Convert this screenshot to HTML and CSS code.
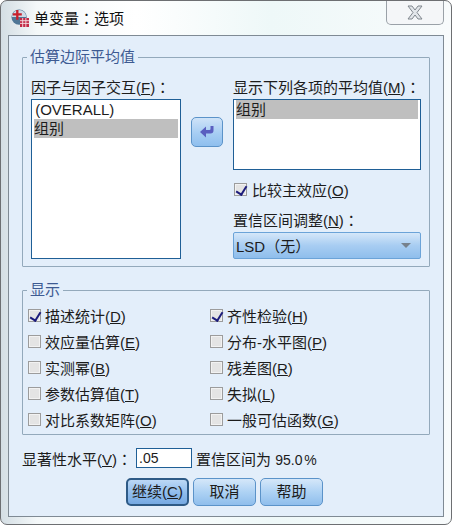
FILE: index.html
```html
<!DOCTYPE html>
<html lang="zh-CN">
  <head>
    <meta charset="UTF-8" />
    <title>单变量：选项</title>
    <link rel="stylesheet" href="styles.css">
  </head>
  <body>
    <div class="window">
      <div class="titlebar">
        <svg class="app-icon" width="18" height="18" viewBox="0 0 20 20">
          <circle cx="9" cy="9" r="8.500" fill="#4f7696"/>
          <path d="M1 9a8 8 0 0 1 16 0z" fill="#cfdbe6"/>
          <path d="M7 1v11M2 6h10" stroke="#c8202c" stroke-width="2.600"/>
          <rect x="10" y="10" width="10" height="10" fill="#c22a46"/>
          <path d="M10 13h10M10 16h10M13 10v10M16.500 10v10" stroke="#f3dfe3" stroke-width="1"/>
        </svg>
        <span class="title">单变量<span class="colon" lang="zh-TW">：</span>选项</span>
        <div class="close">
          <svg width="18" height="15" viewBox="0 0 18 15">
            <path d="M2 1h4l3 4 3-4h4l-5 6.500 5 6.500h-4l-3-4-3 4H2l5-6.500z" fill="#e2e6ea" stroke="#80878e" stroke-width="1"/>
          </svg>
        </div>
      </div>

      <div class="panel">
        <fieldset class="group group-means">
          <legend>估算边际平均值</legend>
          <div class="means">
            <div class="col-left">
              <div class="label">因子与因子交互(<u>F</u>)<span class="colon" lang="zh-TW">：</span></div>
              <div class="list list-factors">
                <div class="item">&nbsp;(OVERALL)</div>
                <div class="item selected">组别</div>
              </div>
            </div>
            <div class="col-mid">
              <div class="arrow-btn">
                <svg width="16" height="14" viewBox="0 0 16 14">
                  <path d="M14.500 1v4.500q0 3-3 3H7V12.500L1 7l6-5.500V5h3.500q1 0 1-1V1z" fill="#5a5fc0"/>
                </svg>
              </div>
            </div>
            <div class="col-right">
              <div class="label">显示下列各项的平均值(<u>M</u>)<span class="colon" lang="zh-TW">：</span></div>
              <div class="list list-shown">
                <div class="item selected">组别</div>
              </div>
              <div class="check compare"><span class="box on"></span><span>比较主效应(<u>O</u>)</span></div>
              <div class="label adjust">置信区间调整(<u>N</u>)<span class="colon" lang="zh-TW">：</span></div>
              <div class="combo">
                <span>LSD（无）</span>
                <span class="caret"></span>
              </div>
            </div>
          </div>
        </fieldset>

        <fieldset class="group group-display">
          <legend>显示</legend>
          <div class="checks">
            <div class="check"><span class="box on"></span><span>描述统计(<u>D</u>)</span></div>
            <div class="check"><span class="box on"></span><span>齐性检验(<u>H</u>)</span></div>
            <div class="check"><span class="box"></span><span>效应量估算(<u>E</u>)</span></div>
            <div class="check"><span class="box"></span><span>分布-水平图(<u>P</u>)</span></div>
            <div class="check"><span class="box"></span><span>实测幂(<u>B</u>)</span></div>
            <div class="check"><span class="box"></span><span>残差图(<u>R</u>)</span></div>
            <div class="check"><span class="box"></span><span>参数估算值(<u>T</u>)</span></div>
            <div class="check"><span class="box"></span><span>失拟(<u>L</u>)</span></div>
            <div class="check"><span class="box"></span><span>对比系数矩阵(<u>O</u>)</span></div>
            <div class="check"><span class="box"></span><span>一般可估函数(<u>G</u>)</span></div>
          </div>
        </fieldset>

        <div class="signif">
          <span class="signif-label">显著性水平(<u>V</u>)<span class="colon" lang="zh-TW">：</span></span>
          <div class="input">.05</div>
          <span>置信区间为 <span class="percent">95.0 %</span></span>
        </div>

        <div class="buttons">
          <div class="btn default">继续(<u>C</u>)</div>
          <div class="btn">取消</div>
          <div class="btn">帮助</div>
        </div>
      </div>
    </div>
  </body>
</html>
```

FILE: styles.css
```css
* {
  box-sizing: border-box;
}
html, body {
  margin: 0;
  padding: 0;
  background: #fff;
}
body {
  width: 452px;
  height: 525px;
  overflow: hidden;
  font-family: "Liberation Sans", "Noto Sans CJK SC", sans-serif;
  font-size: 15px;
  color: #1c1c1c;
}
u {
  text-underline-offset: 1px;
}
/* centered fullwidth colon, as the traditional font draws it */
.colon {
  font-family: "Noto Sans CJK TC", sans-serif;
}

.window {
  width: 452px;
  height: 525px;
  padding: 0 7px 7px;
  border: 1px solid #6d6f72;
  border-radius: 7px;
  background: linear-gradient(90deg, #d4dee4, #f4f8f9 8%, #fff 30%, #eef8f8 60%, #f8fbfc 100%);
}

.titlebar {
  height: 34px;
  display: flex;
  align-items: center;
  padding-bottom: 1px;
}
.app-icon {
  margin: 0 5px 0 3px;
}
.title {
  color: #111;
}
.close {
  width: 58px;
  height: 24px;
  margin-left: auto;
  margin-top: -10px;
  display: flex;
  align-items: center;
  justify-content: center;
  border: 1px solid #9aa1a8;
  border-top: none;
  border-radius: 0 0 5px 5px;
  background: #f4f6f8;
}

.panel {
  height: 482px;
  padding: 21px 13px 0;
  border: 1px solid #7f8a94;
  background: #e3eefa;
}

.group {
  margin: 0;
  padding: 0;
  min-width: 0;
  border: 1px solid #93a9bb;
  border-radius: 1px;
}
.group legend {
  margin-left: 4px;
  padding: 0 3px;
  line-height: 16px;
  color: #3d5a92;
}
.group-means {
  height: 218px;
  margin-top: -8px;
}
.group-display {
  height: 153px;
  margin-top: 15px;
}

.means {
  display: flex;
  padding: 13px 8px 0;
}
.col-left {
  width: 150px;
}
.col-mid {
  width: 52px;
  padding: 39px 0 0 10px;
}
.col-right {
  width: 188px;
}
.label {
  height: 21px;
  line-height: 18px;
  white-space: nowrap;
}

.list {
  border: 1px solid #1f5f96;
  background: #fff;
  padding: 0 2px;
}
.list-factors {
  height: 160px;
}
.list-shown {
  height: 71px;
}
.item {
  height: 19px;
  line-height: 19px;
}
.list-factors .item:first-child {
  text-indent: -3px;
}
.selected {
  background: #bfbfbf;
}

.arrow-btn {
  width: 32px;
  height: 30px;
  display: flex;
  align-items: center;
  justify-content: center;
  border: 1px solid #5b93c9;
  border-radius: 5px;
  background: linear-gradient(#cfe3f8, #a6cdf3 55%, #8fbfee);
}

.check {
  display: flex;
  align-items: center;
  gap: 4px;
  height: 26px;
  white-space: nowrap;
}
.box {
  position: relative;
  width: 13px;
  height: 13px;
  flex: none;
  border: 1px solid #9c9c9c;
  background: #e4e4e4;
  box-shadow: inset 0 0 0 1px #f2f2f2;
}
.box.on::after {
  content: "";
  position: absolute;
  left: 3px;
  top: 0;
  width: 5px;
  height: 9px;
  border: solid #1c1c7c;
  border-width: 0 2.500px 2.500px 0;
  transform: rotate(32deg);
}
.compare {
  margin-top: 6px;
  margin-left: 1px;
  gap: 5px;
}
.adjust {
  margin-top: 9px;
}
.combo {
  height: 27px;
  display: flex;
  align-items: center;
  justify-content: space-between;
  padding: 0 9px 0 2px;
  border: 1px solid #6ba3d8;
  border-radius: 2px;
  background: linear-gradient(#d5e7f9, #a8cdf2 50%, #8fbeec);
}
.caret {
  width: 0;
  height: 0;
  border-left: 5px solid transparent;
  border-right: 5px solid transparent;
  border-top: 5px solid #77818c;
}

.checks {
  display: grid;
  grid-template-columns: 182px 1fr;
  padding: 4px 0 0 5px;
}

.signif {
  display: flex;
  align-items: center;
  margin-top: 12px;
  height: 22px;
}
.signif-label {
  width: 114px;
  white-space: nowrap;
}
.input {
  width: 56px;
  height: 20px;
  margin-right: 4px;
  padding-left: 2px;
  font-size: 14px;
  line-height: 18px;
  border: 1px solid #1f5f96;
  background: #fff;
}
.percent {
  font-size: 14px;
  word-spacing: -2px;
}

.buttons {
  display: flex;
  justify-content: center;
  gap: 4px;
  margin-top: 9px;
  padding-right: 3px;
}
.btn {
  width: 63px;
  height: 28px;
  text-align: center;
  line-height: 26px;
  border: 1px solid #5b93c9;
  border-radius: 5px;
  background: linear-gradient(#d5e7f9, #aed2f4 50%, #8fbeec);
}
.default {
  border: 2px solid #2e5a86;
  line-height: 24px;
  background: linear-gradient(#bcd8f5, #8fbcec 55%, #76a9e2);
}
```
